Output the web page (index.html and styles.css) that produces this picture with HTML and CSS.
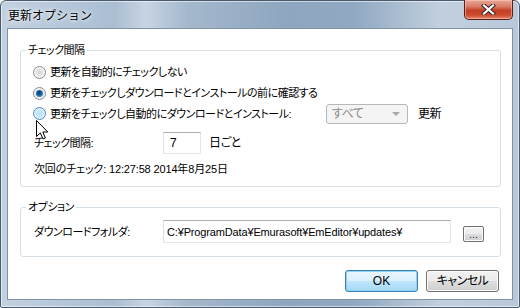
FILE: index.html
```html
<!DOCTYPE html>
<html lang="ja">
<head>
<meta charset="utf-8">
<title>更新オプション</title>
<link rel="stylesheet" href="styles.css">
</head>
<body>
<div class="window">
  <div class="titlebar">
    <span class="title">更新オプション</span>
    <button class="close" aria-label="閉じる">
      <svg width="15" height="11" viewBox="0 0 15 11">
        <path d="M3 1.5 L12 9.5 M12 1.5 L3 9.5" stroke="#3a2a2a" stroke-width="4.2" stroke-linecap="square"/>
        <path d="M3 1.5 L12 9.5 M12 1.5 L3 9.5" stroke="#ffffff" stroke-width="2.2" stroke-linecap="square"/>
      </svg>
    </button>
  </div>
  <div class="client">
    <fieldset class="group group-check">
      <legend>チェック間隔</legend>
      <div class="row r1">
        <span class="radio"></span><span class="rtext">更新を自動的にチェックしない</span>
      </div>
      <div class="row r2">
        <span class="radio checked"></span><span class="rtext">更新をチェックしダウンロードとインストールの前に確認する</span>
      </div>
      <div class="row r3">
        <span class="radiolabel"><span class="radio hover"></span><span class="rtext">更新をチェックし自動的にダウンロードとインストール:</span></span>
        <span class="combo"><span class="combo-text">すべて</span><span class="combo-arrow"></span></span>
        <span class="after">更新</span>
      </div>
      <div class="row r4">
        <span class="flabel">チェック間隔:</span>
        <span class="textbox small">7</span>
        <span class="after2">日ごと</span>
      </div>
      <div class="row r5">
        <span class="plain">次回のチェック: 12:27:58 2014年8月25日</span>
      </div>
    </fieldset>
    <fieldset class="group group-opt">
      <legend>オプション</legend>
      <div class="row r6">
        <span class="flabel">ダウンロードフォルダ:</span>
        <span class="textbox path">C:¥ProgramData¥Emurasoft¥EmEditor¥updates¥</span>
        <span class="browse">...</span>
      </div>
    </fieldset>
    <div class="buttons">
      <span class="btn ok">OK</span>
      <span class="btn cancel">キャンセル</span>
    </div>
    <svg class="cursor" width="14" height="21" viewBox="0 0 14 21">
      <path d="M0.5 0.5 L0.5 16.5 L4.3 12.9 L7 19 L9.4 18 L6.8 12 L11.8 12 Z" fill="#ffffff" stroke="#000000" stroke-width="1" stroke-linejoin="miter"/>
    </svg>
  </div>
</div>
</body>
</html>
```
FILE: styles.css
```css
* { box-sizing: border-box; }
html, body {
  margin: 0;
  padding: 0;
  width: 520px;
  height: 308px;
  overflow: hidden;
  background: #ffffff;
}
body {
  font-family: "Liberation Sans", "Noto Sans CJK JP", sans-serif;
  font-size: 11px;
  line-height: 16px;
  letter-spacing: -0.5px;
  color: #000;
  font-feature-settings: "palt";
}
.window {
  width: 520px;
  height: 308px;
  border: 1px solid #4a5a6c;
  border-radius: 6px 6px 2px 2px;
  padding: 0 6px 7px 6px;
  display: flex;
  flex-direction: column;
  background:
    linear-gradient(90deg, #c2d1e1 0%, #aabed3 22%, #c7d4e2 28%, #a4b8cd 36%, #8ea6bf 55%, #90a8c1 68%, #c2d0de 85%, #b8c8da 100%);
  box-shadow: inset 0 0 0 1px rgba(255,255,255,0.55);
}
.titlebar {
  height: 27px;
  flex: none;
  display: flex;
  align-items: center;
  padding-left: 1px;
}
.title {
  font-family: "Noto Sans CJK JP", sans-serif;
  font-feature-settings: normal;
  letter-spacing: 0;
  font-size: 12px;
  color: #000;
  text-shadow: 0 0 6px rgba(255,255,255,0.9), 0 0 3px rgba(255,255,255,0.9);
}
.close {
  margin-left: auto;
  align-self: flex-start;
  margin-top: -1px;
  width: 49px;
  height: 20px;
  padding: 0;
  border: 1px solid #5a1f17;
  border-top: none;
  border-radius: 0 0 5px 5px;
  background: linear-gradient(180deg, #e9a898 0%, #d97a64 35%, #c43f25 55%, #cf4c2f 80%, #e28a6e 100%);
  box-shadow: inset 0 0 0 1px rgba(255,210,200,0.5);
  display: flex;
  align-items: center;
  justify-content: center;
}
.close svg { display: block; }
.client {
  flex: 1;
  position: relative;
  background: #ffffff;
  border: 1px solid #7f92a8;
  display: flex;
  flex-direction: column;
}
.group {
  margin: 0 11px 0 12px;
  padding: 0;
  border: 1px solid #d5dfe5;
  border-radius: 3px;
  min-width: 0;
}
.group legend {
  margin-left: -7px;
  padding: 0 2px;
  line-height: 16px;
}
.group-check { margin-top: 13px; padding: 4px 0 7px 12px; }
.group-opt { margin-top: 12px; padding: 5px 0 13px 12px; }
.row {
  display: flex;
  align-items: center;
}
.r1 { height: 20px; }
.r2 { height: 20px; margin-top: 1px; }
.r3 { height: 21px; }
.r4 { height: 22px; margin-top: 8px; padding-left: 1px; }
.r5 { height: 20px; margin-top: 5px; padding-left: 1px; }
.r6 { height: 23px; align-items: flex-start; padding-left: 1px; }
.r6 .flabel { align-self: center; }
.radiolabel { display: flex; align-items: center; width: 293px; flex: none; }
.radio {
  width: 13px;
  height: 13px;
  flex: none;
  border-radius: 50%;
  border: 1px solid #8b8b8b;
  background: radial-gradient(circle at 50% 50%, #d4d4d4 0%, #e6e6e6 45%, #f7f7f7 70%, #ffffff 100%);
  box-shadow: inset 0 0 0 1px #f4f4f4;
  margin-right: 4px;
  position: relative;
}
.radio.checked::after {
  content: "";
  position: absolute;
  left: 2px; top: 2px;
  width: 7px; height: 7px;
  border-radius: 50%;
  background: radial-gradient(circle at 45% 40%, #0a3d6c 0%, #1a5f9c 40%, #3b94d6 75%, #79c0ec 100%);
}
.radio.hover {
  border-color: #4b8ac2;
  background: radial-gradient(circle at 50% 50%, #b9e0f8 0%, #cbe9fa 50%, #e4f4fd 80%, #ffffff 100%);
  box-shadow: inset 0 0 0 1px #dff1fc;
}
.rtext, .flabel, .after, .after2, .plain { white-space: nowrap; }
.plain { letter-spacing: -0.15px; }
.combo {
  width: 82px;
  height: 20px;
  flex: none;
  border: 1px solid #b5b9bc;
  border-radius: 3px;
  background: #f4f4f4;
  display: flex;
  align-items: center;
  padding-left: 5px;
  color: #8a8a8a;
  font-size: 12px;
  align-self: flex-end;
}
.combo-text { flex: 1; }
.combo-arrow {
  width: 0; height: 0;
  border-left: 4px solid transparent;
  border-right: 4px solid transparent;
  border-top: 4px solid #a8a8a8;
  margin-right: 7px;
}
.after { margin-left: 10px; font-size: 12px; }
.flabel { width: 129px; flex: none; }
.textbox {
  height: 22px;
  flex: none;
  border: 1px solid #e2e6ea;
  border-top-color: #abadb3;
  border-left-color: #dde1e6;
  background: #fff;
  display: flex;
  align-items: center;
  white-space: nowrap;
  overflow: hidden;
}
.textbox.small { width: 38px; padding-left: 6px; font-size: 12px; }
.after2 { margin-left: 8px; font-size: 12px; }
.textbox.path { width: 288px; height: 23px; padding-left: 3px; letter-spacing: -0.15px; }
.browse {
  margin-left: 12px;
  margin-top: 6px;
  width: 21px;
  height: 16px;
  flex: none;
  border: 1px solid #707070;
  border-radius: 2px;
  background: linear-gradient(180deg, #f2f2f2 0%, #ebebeb 50%, #dddddd 51%, #cfcfcf 100%);
  box-shadow: inset 0 0 0 1px #fbfbfb;
  font-size: 11px;
  line-height: 14px;
  letter-spacing: 0;
  text-align: center;
  color: #1b3a6a;
}
.buttons {
  display: flex;
  justify-content: flex-end;
  gap: 8px;
  margin: 13px 13px 0 0;
}
.btn {
  width: 73px;
  height: 22px;
  border-radius: 3px;
  display: flex;
  align-items: center;
  justify-content: center;
  font-size: 12px;
}
.btn.ok {
  border: 1px solid #3c7fb1;
  background: linear-gradient(180deg, #eaf6fd 0%, #d9f0fc 50%, #bee6fd 51%, #a7d9f5 100%);
  box-shadow: inset 0 0 0 1px #8ed3f7;
  letter-spacing: 0;
}
.btn.cancel {
  border: 1px solid #707070;
  background: linear-gradient(180deg, #f2f2f2 0%, #ebebeb 50%, #dddddd 51%, #cfcfcf 100%);
  box-shadow: inset 0 0 0 1px #fcfcfc;
}
.cursor {
  position: absolute;
  left: 28px;
  top: 91px;
}
```
